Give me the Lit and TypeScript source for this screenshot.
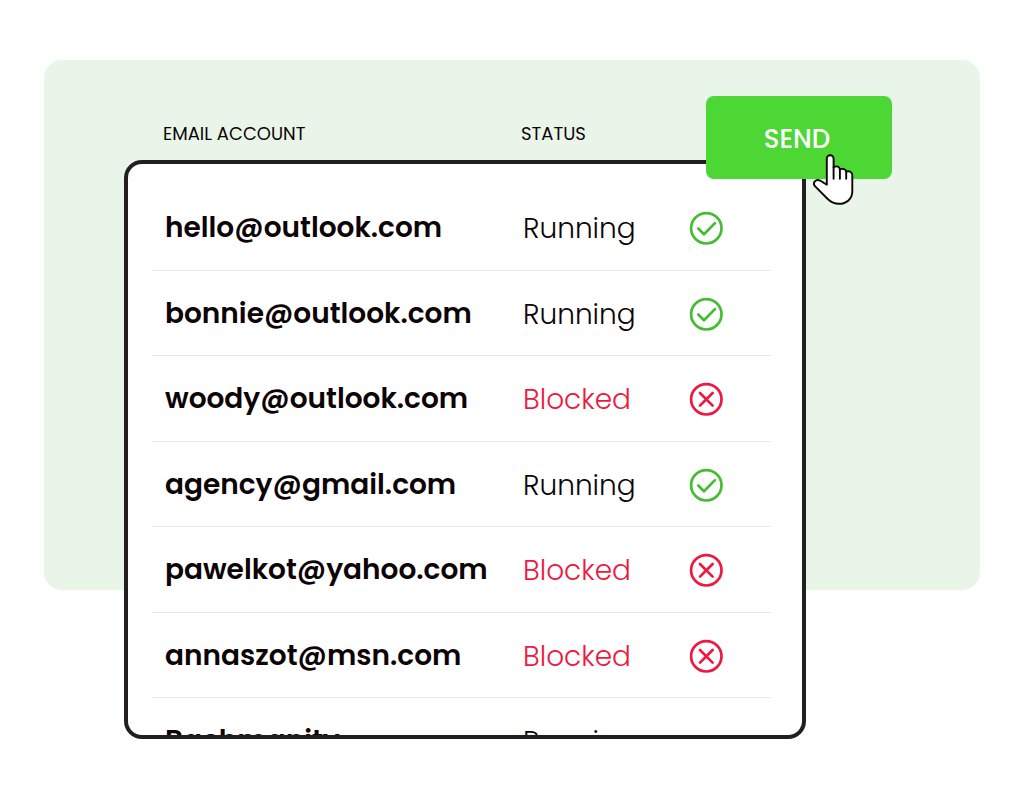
import { LitElement, html, css, svg, nothing } from "lit";
import { customElement } from "lit/decorators.js";
import { classMap } from "lit/directives/class-map.js";

interface Account {
  email: string;
  status: "Running" | "Blocked";
  pending?: boolean;
}

const ACCOUNTS: Account[] = [
  { email: "hello@outlook.com", status: "Running" },
  { email: "bonnie@outlook.com", status: "Running" },
  { email: "woody@outlook.com", status: "Blocked" },
  { email: "agency@gmail.com", status: "Running" },
  { email: "pawelkot@yahoo.com", status: "Blocked" },
  { email: "annaszot@msn.com", status: "Blocked" },
  { email: "Bachmanity", status: "Running", pending: true },
];

@customElement("app-root")
export class AppRoot extends LitElement {
  static styles = css`
    :host {
      display: block;
      font-family: Poppins, Inter, sans-serif;
      color: #0d0406;
      background: #fff;
    }
    .stage {
      position: relative;
      display: grid;
      margin: 60px 44px;
    }
    .panel {
      grid-area: 1 / 1;
      height: 530px;
      border-radius: 18px;
      background: #eaf5e9;
    }
    .accounts {
      grid-area: 1 / 1;
      display: block;
      margin: 0 174px 0 80px;
    }
    .head {
      display: block;
    }
    .row {
      display: grid;
      grid-template-columns: 358px 166px 1fr;
    }
    .labels {
      height: 100px;
      padding: 60px 36px 0 39px;
      box-sizing: border-box;
    }
    .label {
      padding: 0;
      text-align: left;
      font-size: 18px;
      line-height: 28px;
      font-weight: 400;
    }
    .card {
      display: grid;
      grid-template-rows: repeat(6, minmax(0, 7fr)) minmax(0, 3fr);
      height: 579px;
      padding: 21px 31px 0 24px;
      box-sizing: border-box;
      overflow: hidden;
      border: 4px solid #231f20;
      border-radius: 18px;
      background: #fff;
    }
    .account {
      padding: 22px 0 0 13px;
      border-bottom: 1px solid #e8e8e8;
    }
    .account:last-child {
      border-bottom: 0;
    }
    .email,
    .status {
      padding: 0;
      font-size: 28px;
      line-height: 42px;
      white-space: nowrap;
      text-align: left;
    }
    .email {
      font-weight: 600;
    }
    .status {
      padding-top: 1px;
      font-weight: 300;
    }
    .blocked {
      color: #ed1941;
    }
    .mark {
      padding: 4px 0 0;
      line-height: 0;
    }
    .send {
      position: absolute;
      top: 36px;
      right: 88px;
      width: 186px;
      height: 83px;
      padding: 2px 4px 0 0;
      border: 0;
      border-radius: 8px;
      background: #4cd735;
      color: #fff;
      font-family: inherit;
      font-size: 26px;
      line-height: 36px;
      font-weight: 500;
      cursor: pointer;
    }
    .hand {
      position: absolute;
      top: 93px;
      right: 125px;
      pointer-events: none;
    }
  `;

  private renderMark(status: Account["status"]) {
    const ok = status === "Running";
    const color = ok ? "#45bd32" : "#ed1941";
    return html`<svg width="34" height="34" viewBox="0 0 34 34" fill="none"
      stroke=${color} stroke-width="2.7" stroke-linecap="round" stroke-linejoin="round" aria-hidden="true">
      <circle cx="17.3" cy="17.3" r="15.2" />
      ${ok
        ? svg`<path d="M9.3 17.5 15 23.3 25.9 12.1" />`
        : svg`<path d="M11 11 23.6 23.6M23.6 11 11 23.6" />`}
    </svg>`;
  }

  render() {
    return html`
      <main class="stage">
        <div class="panel"></div>
        <table class="accounts">
          <thead class="head">
            <tr class="row labels">
              <th class="label" scope="col">EMAIL ACCOUNT</th>
              <th class="label" scope="col">STATUS</th>
            </tr>
          </thead>
          <tbody class="card">
            ${ACCOUNTS.map(
              (a) => html`<tr class="row account">
                <th class="email" scope="row">${a.email}</th>
                <td class=${classMap({ status: true, blocked: a.status === "Blocked" })}>${a.status}</td>
                <td class="mark">${a.pending ? nothing : this.renderMark(a.status)}</td>
              </tr>`
            )}
          </tbody>
        </table>
        <button class="send" type="button">SEND</button>
        <svg class="hand" width="42" height="53" viewBox="0 0 42 53" fill="#fff" stroke="#0d0406"
          stroke-width="1.9" stroke-linecap="round" stroke-linejoin="round" aria-hidden="true">
          <path d="M13.8 31.8V5.6a3.4 3.4 0 0 1 6.8 0v8.800c3-2 6-.8 6.300 2 3-1.200 6 0 6.300 2.200 3-1 6.100.2 6.100 3.400v16.200C39.300 46 33.400 50.800 26 50.800c-4.300 0-8-1.600-11.300-4.800L2.400 33.600c-3.600-3.700.4-8.600 5.400-5.600Z" />
          <path d="M20.600 14.500V25.800M26.900 16.400V25.800M33.200 18.600V25.800" />
        </svg>
      </main>
    `;
  }
}
